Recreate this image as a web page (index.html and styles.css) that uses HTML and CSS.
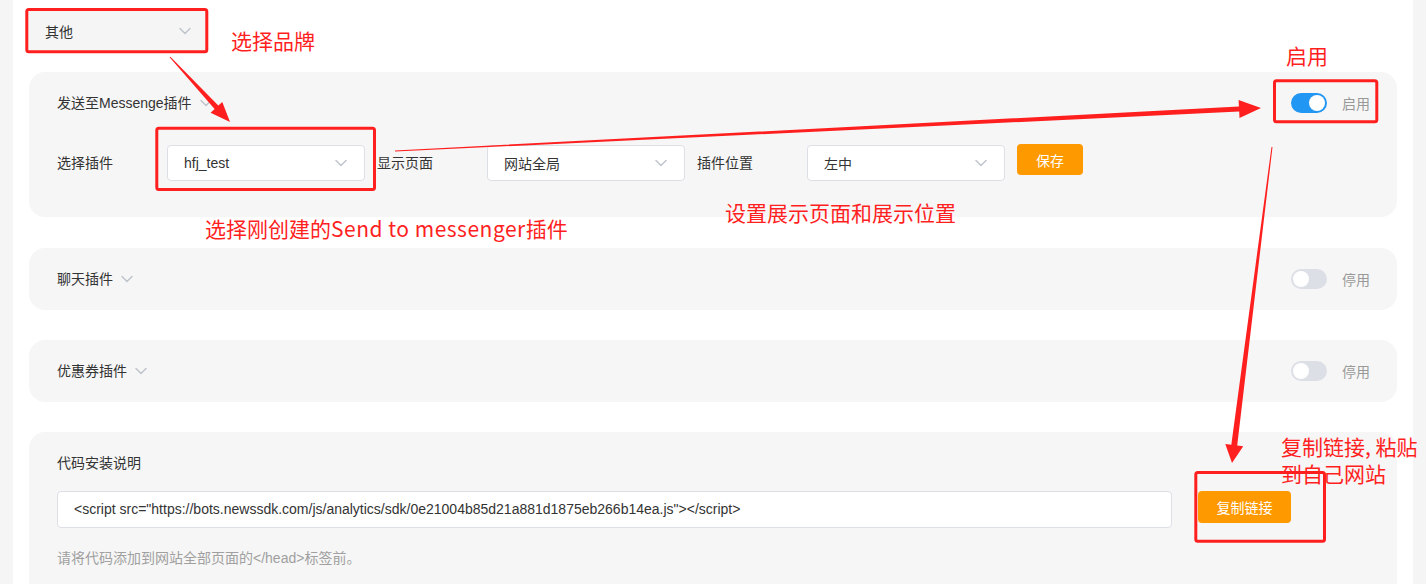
FILE: index.html
```html
<!DOCTYPE html>
<html lang="zh-CN">
<head>
<meta charset="utf-8">
<title>插件设置</title>
<link rel="stylesheet" href="styles.css">
</head>
<body>
<div class="page">
  <main class="main">
    <div class="brand-select">
      <span>其他</span>
      <svg class="chev" width="12" height="8" viewBox="0 0 12 8"><path d="M1 1.5 L6 6.5 L11 1.5" /></svg>
    </div>

    <section class="card card-plugin">
      <div class="card-head">
        <div class="card-title">发送至Messenge插件<svg class="chev" width="12" height="8" viewBox="0 0 12 8"><path d="M1 1.5 L6 6.5 L11 1.5" /></svg></div>
        <div class="switch-wrap"><span class="switch on"></span><span class="switch-text">启用</span></div>
      </div>
      <div class="form-row">
        <span class="label">选择插件</span>
        <div class="select"><span>hfj_test</span><svg class="chev" width="12" height="8" viewBox="0 0 12 8"><path d="M1 1.5 L6 6.5 L11 1.5" /></svg></div>
        <span class="label">显示页面</span>
        <div class="select"><span>网站全局</span><svg class="chev" width="12" height="8" viewBox="0 0 12 8"><path d="M1 1.5 L6 6.5 L11 1.5" /></svg></div>
        <span class="label">插件位置</span>
        <div class="select"><span>左中</span><svg class="chev" width="12" height="8" viewBox="0 0 12 8"><path d="M1 1.5 L6 6.5 L11 1.5" /></svg></div>
        <button class="btn btn-save">保存</button>
      </div>
    </section>

    <section class="card card-simple card-chat">
      <div class="card-head">
        <div class="card-title">聊天插件<svg class="chev" width="12" height="8" viewBox="0 0 12 8"><path d="M1 1.5 L6 6.5 L11 1.5" /></svg></div>
        <div class="switch-wrap"><span class="switch"></span><span class="switch-text">停用</span></div>
      </div>
    </section>

    <section class="card card-simple card-coupon">
      <div class="card-head">
        <div class="card-title">优惠券插件<svg class="chev" width="12" height="8" viewBox="0 0 12 8"><path d="M1 1.5 L6 6.5 L11 1.5" /></svg></div>
        <div class="switch-wrap"><span class="switch"></span><span class="switch-text">停用</span></div>
      </div>
    </section>

    <section class="card card-code">
      <div class="card-title">代码安装说明</div>
      <div class="code-row">
        <div class="code-input">&lt;script src="https://bots.newssdk.com/js/analytics/sdk/0e21004b85d21a881d1875eb266b14ea.js"&gt;&lt;/script&gt;</div>
        <button class="btn btn-copy">复制链接</button>
      </div>
      <p class="hint">请将代码添加到网站全部页面的&lt;/head&gt;标签前。</p>
    </section>
  </main>

  <div class="annotations">
    <svg class="marks" width="1426" height="584" viewBox="0 0 1426 584">
      <g fill="none" stroke="#ff1f1f" stroke-width="3">
        <rect x="26.8" y="9.5" width="180" height="42.3" rx="2"/>
        <rect x="156.8" y="128.2" width="217.7" height="61.3" rx="2"/>
        <rect x="1274.5" y="80.8" width="102.3" height="41" rx="2"/>
        <rect x="1195.8" y="472.5" width="128.7" height="68.7" rx="2"/>
      </g>
      <g fill="#ff1f1f">
        <polygon points="169.6,57.3 214.6,109 210.6,112.7 230,122 222.3,101.9 218.3,105.6 170.4,56.7"/>
        <polygon points="395,151.5 1239.2,111.6 1239.5,118.1 1261,108 1238.6,100.1 1238.9,106.6 395,150.5"/>
        <polygon points="1272.5,147.1 1237.2,445.5 1243.2,446.3 1232,463 1225.3,444 1231.3,444.8 1271.5,146.9"/>
      </g>
    </svg>
    <span class="note note-brand">选择品牌</span>
    <span class="note note-enable">启用</span>
    <span class="note note-plugin">选择刚创建的<span class="latin">Send to messenger</span>插件</span>
    <span class="note note-pos">设置展示页面和展示位置</span>
    <span class="note note-copy1">复制链接, 粘贴</span>
    <span class="note note-copy2">到自己网站</span>
  </div>
</div>
</body>
</html>
```

FILE: styles.css
```css
* { box-sizing: border-box; }

html, body {
  margin: 0;
  padding: 0;
}

body {
  background: #f5f5f5;
  font-family: "Liberation Sans", "Noto Sans CJK SC", sans-serif;
  font-size: 14px;
  color: #333;
  overflow: hidden;
}

.page {
  position: relative;
  width: 1426px;
  height: 584px;
  overflow: hidden;
}

.main {
  margin: 0 13px;
  height: 584px;
  background: #fff;
  padding: 11px 16px 0;
}

.chev {
  display: block;
  flex: none;
}
.chev path {
  fill: none;
  stroke: #c0c4cc;
  stroke-width: 1.5;
  stroke-linecap: round;
  stroke-linejoin: round;
}

.brand-select {
  width: 180px;
  height: 40px;
  margin-left: -2px;
  background: #f5f5f5;
  border-radius: 4px;
  display: flex;
  align-items: center;
  justify-content: space-between;
  padding: 0 16px 0 18px;
}

.card {
  background: #f6f6f6;
  border-radius: 16px;
  padding: 20px 27px 0 28px;
}

.card-plugin {
  margin-top: 21px;
  padding-bottom: 36px;
}

.card-simple {
  padding-bottom: 20px;
}
.card-chat { margin-top: 31px; }
.card-coupon { margin-top: 30px; }
.card-code {
  margin-top: 30px;
  padding-bottom: 30px;
}

.card-head {
  display: flex;
  align-items: center;
  justify-content: space-between;
  height: 22px;
}

.card-title {
  display: flex;
  align-items: center;
  gap: 8px;
  line-height: 22px;
  color: #333;
}

.switch-wrap {
  display: flex;
  align-items: center;
  gap: 15px;
}

.switch {
  position: relative;
  width: 36px;
  height: 20px;
  border-radius: 10px;
  background: #dcdfe6;
}
.switch::after {
  content: "";
  position: absolute;
  top: 2px;
  left: 2px;
  width: 16px;
  height: 16px;
  border-radius: 50%;
  background: #fff;
}
.switch.on { background: #2196f3; }
.switch.on::after { left: 18px; }

.switch-text {
  color: #999;
}

.form-row {
  display: flex;
  align-items: flex-start;
  margin-top: 31px;
}

.label {
  width: 110px;
  line-height: 36px;
  color: #333;
}

.select {
  width: 198px;
  height: 36px;
  margin-right: 12px;
  background: #fff;
  border: 1px solid #dcdfe6;
  border-radius: 4px;
  display: flex;
  align-items: center;
  justify-content: space-between;
  padding: 0 17px 0 16px;
  color: #333;
}

.btn {
  border: 0;
  border-radius: 4px;
  background: #ff9900;
  color: #fff;
  font: inherit;
  cursor: pointer;
}

.btn-save {
  width: 66px;
  height: 31px;
  margin-top: -1px;
}

.code-row {
  display: flex;
  align-items: flex-start;
  margin-top: 17px;
}

.code-input {
  width: 1115px;
  height: 37px;
  background: #fff;
  border: 1px solid #dcdfe6;
  border-radius: 4px;
  padding-left: 16px;
  line-height: 35px;
  color: #333;
  white-space: nowrap;
}

.btn-copy {
  width: 93px;
  height: 32px;
  margin-left: 26px;
}

.hint {
  margin: 20px 0 0;
  line-height: 20px;
  color: #a0a0a0;
}

/* annotation layer */
.annotations {
  position: absolute;
  inset: 0;
  pointer-events: none;
}

.marks {
  position: absolute;
  left: 0;
  top: 0;
}

.note {
  position: absolute;
  color: #ff1f1f;
  font-family: "Noto Sans CJK SC", "Liberation Sans", sans-serif;
  font-size: 21px;
  line-height: 28px;
  white-space: nowrap;
}

.note .latin {
  letter-spacing: 0.5px;
}

.note-brand { left: 231px; top: 26px; }
.note-enable { left: 1286px; top: 41px; }
.note-plugin { left: 205px; top: 214px; }
.note-pos { left: 725px; top: 198px; }
.note-copy1 { left: 1281px; top: 433px; line-height: 27px; }
.note-copy2 { left: 1281px; top: 460px; line-height: 27px; }
```
